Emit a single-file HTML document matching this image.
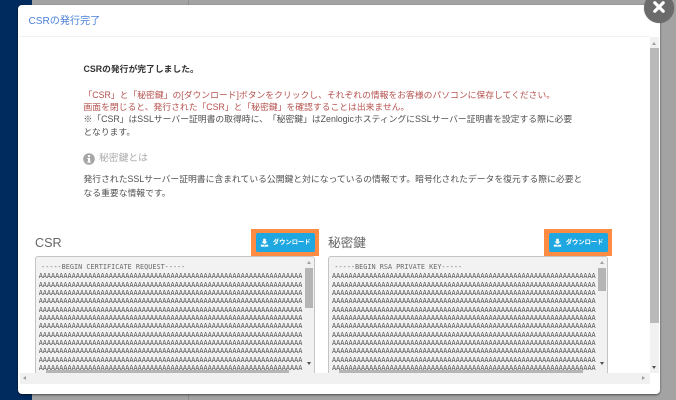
<!DOCTYPE html>
<html lang="ja">
<head>
<meta charset="utf-8">
<style>
html,body{margin:0;padding:0;width:676px;height:400px;overflow:hidden;background:#a3a3a3;}
body{position:relative;font-family:"Liberation Sans","Noto Sans CJK JP",sans-serif;color:#444;text-spacing-trim:space-all;filter:blur(.3px);}
div{box-sizing:border-box;}
.a{position:absolute;}
.t{position:absolute;white-space:nowrap;font-size:8.8px;line-height:13px;left:83.5px;color:#505050;}
.red{color:#b5524f;}
.ta{position:absolute;top:256px;width:280.5px;height:117px;background:#f2f2f2;border:1px solid #c4c4c4;border-bottom:0;border-radius:3px 3px 0 0;overflow:hidden;}
.m{position:absolute;left:3.2px;top:5.6px;font-family:"DejaVu Sans Mono",monospace;font-size:6.85px;line-height:8.33px;color:#505050;white-space:pre;}
.m b{display:block;font-weight:normal;color:#6a6a6a;padding-left:2.4px;margin-bottom:1.4px;}
.sb{position:absolute;right:0;top:0;width:9px;height:113px;background:#f1f1f1;}
.thumb{position:absolute;right:1px;top:11px;width:8px;background:#b5b5b5;}
.hb{position:absolute;left:0;top:113px;height:4px;width:281px;background:#f1f1f1;}
.hb i{position:absolute;left:10px;top:0;height:4px;width:243px;background:#b5b5b5;}
.up{position:absolute;width:0;height:0;border-left:2.5px solid transparent;border-right:2.5px solid transparent;border-bottom:3px solid #a0a0a0;}
.dn{position:absolute;width:0;height:0;border-left:2.5px solid transparent;border-right:2.5px solid transparent;border-top:3px solid #505050;}
.btnw{position:absolute;top:229px;width:68.5px;height:27px;background:#ff8c42;}
.btn{position:absolute;left:5px;top:4px;width:59.5px;height:19px;background:#1ea7e1;border-radius:2px;color:#fff;font-size:6.3px;font-weight:bold;line-height:19px;white-space:nowrap;}
.btn span{position:absolute;left:17px;top:0;}
.btn svg{position:absolute;left:4.3px;top:4.5px;}
.h{position:absolute;top:233.5px;font-size:12.6px;line-height:18px;color:#666;white-space:nowrap;}
</style>
</head>
<body>
<div class="a" style="left:0;top:0;width:32px;height:400px;background:#002b5e;"></div>
<div class="a" style="left:188px;top:0;width:1px;height:5px;background:#8f8f8f;"></div>
<div class="a" style="left:188px;top:393px;width:1px;height:7px;background:#8f8f8f;"></div>
<div class="a" style="left:18px;top:5px;width:642px;height:388.5px;background:#fff;border-radius:4px;box-shadow:0 1px 2px rgba(0,0,0,.55);"></div>

<div class="a" style="left:28.5px;top:14px;font-size:10.1px;line-height:16px;color:#4a80d8;white-space:nowrap;">CSRの発行完了</div>
<div class="a" style="left:19px;top:36px;width:631px;height:1px;background:#f2f2f2;"></div>

<div class="t" style="top:63px;font-weight:bold;color:#333;">CSRの発行が完了しました。</div>
<div class="t red" style="top:88.5px;">「CSR」と「秘密鍵」の[ダウンロード]ボタンをクリックし、それぞれの情報をお客様のパソコンに保存してください。</div>
<div class="t red" style="top:100.5px;">画面を閉じると、発行された「CSR」と「秘密鍵」を確認することは出来ません。</div>
<div class="t" style="top:113px;">※「CSR」はSSLサーバー証明書の取得時に、「秘密鍵」はZenlogicホスティングにSSLサーバー証明書を設定する際に必要</div>
<div class="t" style="top:125.5px;">となります。</div>

<svg class="a" style="left:83px;top:152.5px;" width="12" height="12" viewBox="0 0 12 12"><circle cx="6" cy="6" r="5.8" fill="#a6a6a6"/><rect x="4.9" y="2.2" width="2.2" height="1.9" fill="#fff"/><path d="M4.3 5h2.8v3.6h.8v1H4.2v-1h.8V6h-.7z" fill="#fff"/></svg>
<div class="t" style="left:99px;top:152px;font-size:9.8px;color:#aaa;">秘密鍵とは</div>
<div class="t" style="top:173px;">発行されたSSLサーバー証明書に含まれている公開鍵と対になっているの情報です。暗号化されたデータを復元する際に必要と</div>
<div class="t" style="top:186.5px;">なる重要な情報です。</div>

<div class="h" style="left:35px;">CSR</div>
<div class="h" style="left:328px;">秘密鍵</div>

<div class="btnw" style="left:250.8px;"><div class="btn"><svg width="9" height="9" viewBox="0 0 9 9"><path d="M3.2 .8h2.6v2.8h1.7L4.5 6.4 1.5 3.6h1.7zM.8 6.6h2.4l1.3 1 1.3-1h2.4v2H.8z" fill="#fff"/></svg><span>ダウンロード</span></div></div>
<div class="btnw" style="left:543.7px;"><div class="btn"><svg width="9" height="9" viewBox="0 0 9 9"><path d="M3.2 .8h2.6v2.8h1.7L4.5 6.4 1.5 3.6h1.7zM.8 6.6h2.4l1.3 1 1.3-1h2.4v2H.8z" fill="#fff"/></svg><span>ダウンロード</span></div></div>

<div class="ta" style="left:34.5px;">
<div class="m"><b>-----BEGIN CERTIFICATE REQUEST-----</b>AAAAAAAAAAAAAAAAAAAAAAAAAAAAAAAAAAAAAAAAAAAAAAAAAAAAAAAAAAAAAAAA
AAAAAAAAAAAAAAAAAAAAAAAAAAAAAAAAAAAAAAAAAAAAAAAAAAAAAAAAAAAAAAAA
AAAAAAAAAAAAAAAAAAAAAAAAAAAAAAAAAAAAAAAAAAAAAAAAAAAAAAAAAAAAAAAA
AAAAAAAAAAAAAAAAAAAAAAAAAAAAAAAAAAAAAAAAAAAAAAAAAAAAAAAAAAAAAAAA
AAAAAAAAAAAAAAAAAAAAAAAAAAAAAAAAAAAAAAAAAAAAAAAAAAAAAAAAAAAAAAAA
AAAAAAAAAAAAAAAAAAAAAAAAAAAAAAAAAAAAAAAAAAAAAAAAAAAAAAAAAAAAAAAA
AAAAAAAAAAAAAAAAAAAAAAAAAAAAAAAAAAAAAAAAAAAAAAAAAAAAAAAAAAAAAAAA
AAAAAAAAAAAAAAAAAAAAAAAAAAAAAAAAAAAAAAAAAAAAAAAAAAAAAAAAAAAAAAAA
AAAAAAAAAAAAAAAAAAAAAAAAAAAAAAAAAAAAAAAAAAAAAAAAAAAAAAAAAAAAAAAA
AAAAAAAAAAAAAAAAAAAAAAAAAAAAAAAAAAAAAAAAAAAAAAAAAAAAAAAAAAAAAAAA
AAAAAAAAAAAAAAAAAAAAAAAAAAAAAAAAAAAAAAAAAAAAAAAAAAAAAAAAAAAAAAAA
AAAAAAAAAAAAAAAAAAAAAAAAAAAAAAAAAAAAAAAAAAAAAAAAAAAAAAAAAAAAAAAA</div>
<div class="sb"><div class="up" style="left:2px;top:4px;"></div><div class="thumb" style="height:40px;"></div><div class="dn" style="left:2px;top:105px;"></div></div>
<div class="hb"><i></i></div>
</div>

<div class="ta" style="left:327.8px;">
<div class="m"><b>-----BEGIN RSA PRIVATE KEY-----</b>AAAAAAAAAAAAAAAAAAAAAAAAAAAAAAAAAAAAAAAAAAAAAAAAAAAAAAAAAAAAAAAA
AAAAAAAAAAAAAAAAAAAAAAAAAAAAAAAAAAAAAAAAAAAAAAAAAAAAAAAAAAAAAAAA
AAAAAAAAAAAAAAAAAAAAAAAAAAAAAAAAAAAAAAAAAAAAAAAAAAAAAAAAAAAAAAAA
AAAAAAAAAAAAAAAAAAAAAAAAAAAAAAAAAAAAAAAAAAAAAAAAAAAAAAAAAAAAAAAA
AAAAAAAAAAAAAAAAAAAAAAAAAAAAAAAAAAAAAAAAAAAAAAAAAAAAAAAAAAAAAAAA
AAAAAAAAAAAAAAAAAAAAAAAAAAAAAAAAAAAAAAAAAAAAAAAAAAAAAAAAAAAAAAAA
AAAAAAAAAAAAAAAAAAAAAAAAAAAAAAAAAAAAAAAAAAAAAAAAAAAAAAAAAAAAAAAA
AAAAAAAAAAAAAAAAAAAAAAAAAAAAAAAAAAAAAAAAAAAAAAAAAAAAAAAAAAAAAAAA
AAAAAAAAAAAAAAAAAAAAAAAAAAAAAAAAAAAAAAAAAAAAAAAAAAAAAAAAAAAAAAAA
AAAAAAAAAAAAAAAAAAAAAAAAAAAAAAAAAAAAAAAAAAAAAAAAAAAAAAAAAAAAAAAA
AAAAAAAAAAAAAAAAAAAAAAAAAAAAAAAAAAAAAAAAAAAAAAAAAAAAAAAAAAAAAAAA
AAAAAAAAAAAAAAAAAAAAAAAAAAAAAAAAAAAAAAAAAAAAAAAAAAAAAAAAAAAAAAAA</div>
<div class="sb"><div class="up" style="left:2px;top:4px;"></div><div class="thumb" style="height:23px;"></div><div class="dn" style="left:2px;top:105px;"></div></div>
<div class="hb"><i style="width:244px;"></i></div>
</div>

<!-- outer horizontal scrollbar -->
<div class="a" style="left:20px;top:373px;width:630px;height:11px;background:#f1f1f1;"></div>
<div class="a" style="left:23px;top:376px;width:0;height:0;border-top:2.5px solid transparent;border-bottom:2.5px solid transparent;border-right:3px solid #a0a0a0;"></div>
<div class="a" style="left:642px;top:376px;width:0;height:0;border-top:2.5px solid transparent;border-bottom:2.5px solid transparent;border-left:3px solid #a0a0a0;"></div>

<!-- outer vertical scrollbar -->
<div class="a" style="left:650px;top:37px;width:9px;height:336px;background:#f1f1f1;"></div>
<div class="a" style="left:650px;top:48px;width:9px;height:275px;background:#b9b9b9;"></div>
<div class="up" style="left:652px;top:42px;"></div>
<div class="dn" style="left:652px;top:366px;"></div>

<!-- close -->
<div class="a" style="left:644px;top:-7.5px;width:30px;height:30px;border-radius:50%;background:#6b6b6b;box-shadow:0 0 1px rgba(0,0,0,.4);"></div>
<svg class="a" style="left:652px;top:0;" width="14" height="14" viewBox="0 0 14 14"><path d="M2.8 2.8l8.4 8.4M11.2 2.8l-8.4 8.4" stroke="#fff" stroke-width="3.2" stroke-linecap="round"/></svg>
</body>
</html>
